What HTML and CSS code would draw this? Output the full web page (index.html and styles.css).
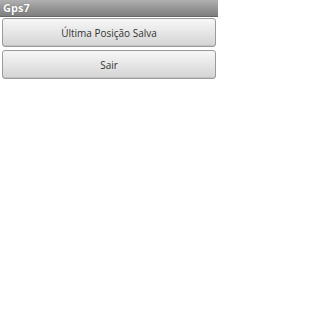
FILE: index.html
```html
<!DOCTYPE html>
<html>
<head>
<meta charset="utf-8">
<link rel="stylesheet" href="styles.css">
</head>
<body>
<div class="titlebar">Gps7</div>
<div class="buttons">
  <div class="btn">Última Posição Salva</div>
  <div class="btn">Sair</div>
</div>
</body>
</html>
```
FILE: styles.css
```css
html, body {
  margin: 0;
  padding: 0;
  background: #ffffff;
}
body {
  font-family: "Open Sans", "DejaVu Sans", sans-serif;
  width: 218px;
  height: 310px;
}
.titlebar {
  height: 17px;
  box-sizing: border-box;
  padding-left: 3px;
  background: linear-gradient(to bottom, #b0b0b0 0%, #969696 50%, #7e7e7e 100%);
  border-bottom: 1px solid #666666;
  color: #ffffff;
  font-weight: bold;
  font-size: 11px;
  line-height: 16px;
  text-shadow: 0 0 1px #555;
}
.buttons {
  display: flex;
  flex-direction: column;
  gap: 3px;
  padding: 1px 2px 0 2px;
}
.btn {
  height: 29px;
  box-sizing: border-box;
  border: 1px solid #9a9a9a;
  border-radius: 3px;
  background: linear-gradient(to bottom, #f7f7f7 0%, #e6e6e6 50%, #d4d4d4 100%);
  color: #333333;
  font-size: 10px;
  display: flex;
  align-items: center;
  justify-content: center;
  box-shadow: inset 0 -1px 0 #c4c4c4;
}
```
